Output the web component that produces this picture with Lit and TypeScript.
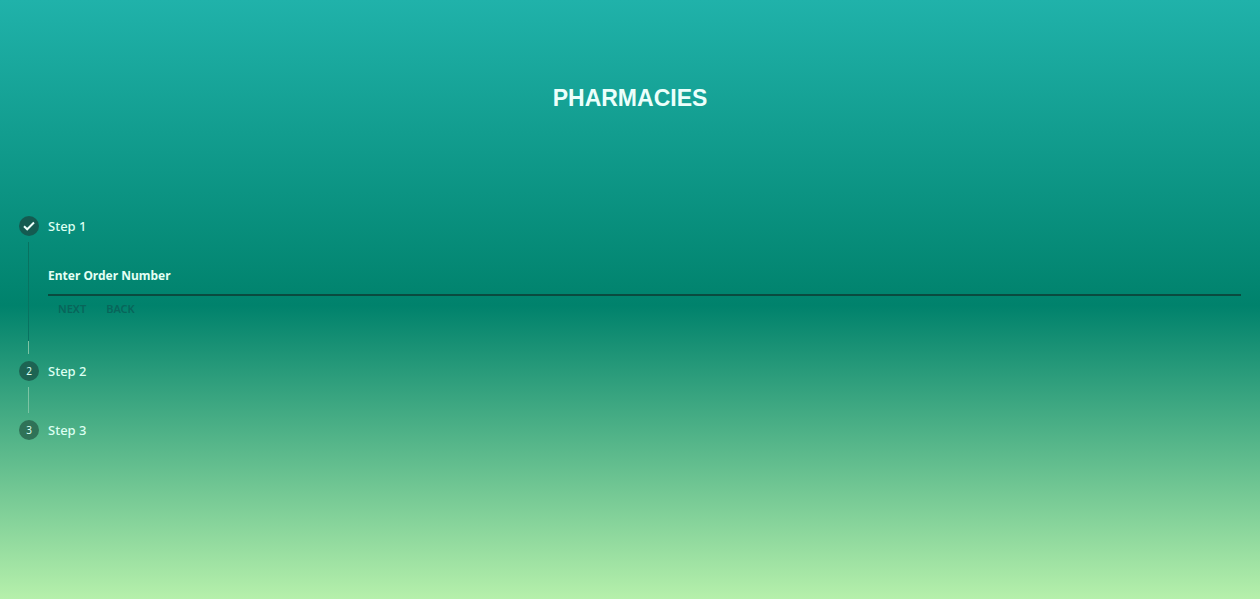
import { LitElement, html, css } from "lit";
import { customElement, state } from "lit/decorators.js";

@customElement("app-root")
export class AppRoot extends LitElement {
  static styles = css`
    :host {
      display: block;
    }
    .page {
      box-sizing: border-box;
      min-height: 100vh;
      padding: 84px 19px 0;
      color: #dcfff2;
      font-family: "Segoe UI", "Noto Sans", sans-serif;
      background: linear-gradient(#20b2aa, #00826c 51%, #b6f0ab);
    }
    .title {
      margin: 0 0 104px;
      font: bold 23px/28px Arial, "Liberation Sans", sans-serif;
      text-align: center;
      color: #ecfffb;
    }
    .steps {
      margin: 0;
      padding: 0;
      list-style: none;
    }
    .label {
      display: flex;
      align-items: center;
      gap: 9px;
      height: 20px;
      font-size: 13px;
      line-height: 20px;
      font-weight: 500;
    }
    .badge {
      display: flex;
      align-items: center;
      justify-content: center;
      width: 20px;
      height: 20px;
      border-radius: 50%;
      background: #145b51;
      font-size: 10px;
      font-weight: 400;
    }
    .badge.second {
      background: #1d6453;
    }
    .badge.third {
      background: #2f7257;
    }
    .content {
      margin: 6px 0 0 9px;
      padding: 23px 0 21px 19px;
      border-left: 1px solid #087260;
    }
    .connector {
      height: 26px;
      margin: 6px 0 7px 9px;
      border-left: 1px solid #7cc4a4;
    }
    .connector.short {
      height: 13px;
      margin-top: 0;
    }
    .field {
      display: block;
      box-sizing: border-box;
      width: 100%;
      height: 31px;
      padding: 0 0 8px;
      border: 0;
      border-bottom: 2px solid #0a4b3f;
      border-radius: 0;
      outline: 0;
      background: none;
      color: inherit;
      font: 700 12px/20px "Segoe UI", "Noto Sans", sans-serif;
    }
    .field::placeholder {
      color: #e4fff4;
      opacity: 1;
    }
    .actions {
      display: flex;
    }
    .action {
      padding: 5px 10px 3px;
      border: 0;
      background: none;
      color: #08655a;
      font: 600 11px/16px "Segoe UI", "Noto Sans", sans-serif;
      cursor: pointer;
    }
  `;

  @state() private order = "";

  render() {
    return html`
      <main class="page">
        <h1 class="title">PHARMACIES</h1>
        <ol class="steps">
          <li>
            <div class="label">
              <span class="badge">
                <svg width="14" height="14" viewBox="0 0 14 14" fill="none" stroke="#ecfffb" stroke-width="2" aria-hidden="true">
                  <path d="M2 7.2 5.2 10.3 12 3.5" />
                </svg>
              </span>
              <span>Step 1</span>
            </div>
            <div class="content">
              <input
                class="field"
                type="text"
                aria-label="Enter Order Number"
                placeholder="Enter Order Number"
                .value=${this.order}
                @input=${(e: Event) => (this.order = (e.target as HTMLInputElement).value)}
              />
              <div class="actions">
                <button class="action" type="button">NEXT</button>
                <button class="action" type="button">BACK</button>
              </div>
            </div>
            <div class="connector short"></div>
          </li>
          <li>
            <div class="label"><span class="badge second">2</span><span>Step 2</span></div>
            <div class="connector"></div>
          </li>
          <li>
            <div class="label"><span class="badge third">3</span><span>Step 3</span></div>
          </li>
        </ol>
      </main>
    `;
  }
}
